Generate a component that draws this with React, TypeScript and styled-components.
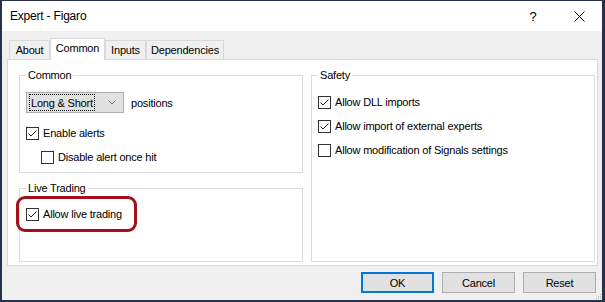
import React from "react";
import styled, { createGlobalStyle } from "styled-components";

const Global = createGlobalStyle`
  html, body { margin: 0; padding: 0; background: #f0f0f0; }
  body {
    font-family: "Liberation Sans", Arial, sans-serif;
    font-size: 11px;
    letter-spacing: -0.2px;
    color: #000;
  }
  * { box-sizing: border-box; }
`;

const Window = styled.div`
  position: relative;
  width: 605px;
  height: 302px;
  border: 1px solid #26314c;
  border-left-width: 2px;
  border-right-width: 3px;
  border-bottom-width: 2px;
  background: #f0f0f0;
  display: flex;
  flex-direction: column;
`;

const TitleBar = styled.div`
  height: 30px;
  background: #fff;
  display: flex;
  align-items: center;
  padding-left: 8px;
`;

const Title = styled.div`
  flex: 1;
  font-size: 12px;
  letter-spacing: -0.2px;
`;

const CaptionButton = styled.div`
  width: 46px;
  height: 30px;
  display: flex;
  align-items: center;
  justify-content: center;
  font-size: 13px;
`;

const Body = styled.div`
  flex: 1;
  display: flex;
  flex-direction: column;
  padding: 7px 4px 0 5px;
`;

const TabStrip = styled.div`
  height: 21px;
  display: flex;
  align-items: flex-start;
  padding-left: 2px;
  position: relative;
  z-index: 1;
`;

const Tab = styled.div<{ $active?: boolean; $w: number }>`
  width: ${(p) => p.$w}px;
  height: ${(p) => (p.$active ? 22 : 19)}px;
  margin-top: ${(p) => (p.$active ? 0 : 2)}px;
  background: ${(p) => (p.$active ? "#fff" : "#f0f0f0")};
  border: 1px solid #d9d9d9;
  border-bottom: none;
  display: flex;
  justify-content: center;
  padding-top: 3px;
  line-height: 13px;
`;

const Panel = styled.div`
  height: 207px;
  background: #fff;
  border: 1px solid #d9d9d9;
  padding: 8px 2px 3px 11px;
  display: grid;
  grid-template-columns: 1fr 1fr;
  column-gap: 8px;
`;

const Column = styled.div`
  display: flex;
  flex-direction: column;
  gap: 8px;
`;

const Group = styled.fieldset<{ $h: number }>`
  margin: 0;
  min-width: 0;
  height: ${(p) => p.$h}px;
  border: 1px solid #dcdcdc;
  padding: 0 6px;
  display: flex;
  flex-direction: column;
`;

const Legend = styled.legend`
  padding: 0 2px;
  line-height: 14px;
  font-size: 11px;
`;

const Row = styled.div<{ $indent?: number; $mt?: number }>`
  position: relative;
  height: 24px;
  display: flex;
  align-items: center;
  gap: 4px;
  margin-left: ${(p) => p.$indent ?? 0}px;
  margin-top: ${(p) => p.$mt ?? 0}px;
`;

const Box = styled.span`
  width: 13px;
  height: 13px;
  border: 1px solid #333;
  background: #fff;
  display: inline-flex;
  flex: none;
`;

const SelectRow = styled.div`
  display: flex;
  align-items: center;
  gap: 7px;
  margin-top: 10px;
  margin-bottom: 8px;
`;

const Select = styled.div`
  width: 98px;
  height: 21px;
  background: #e1e1e1;
  border: 1px solid #adadad;
  display: flex;
  align-items: center;
  padding: 0 2px;
`;

const SelectValue = styled.span`
  flex: none;
  height: 17px;
  border: 1px dotted #000;
  display: flex;
  align-items: center;
  padding: 0 1px;
  white-space: nowrap;
`;

const Chevron = styled.span`
  flex: 1;
  display: flex;
  justify-content: center;
  padding-left: 8px;
`;

const Highlight = styled.div`
  position: absolute;
  left: -10px;
  top: -6px;
  width: 121px;
  height: 36px;
  border: 3px solid #a3101c;
  border-radius: 9px;
  pointer-events: none;
`;

const Footer = styled.div`
  display: flex;
  justify-content: flex-end;
  gap: 8px;
  margin-top: 6px;
  margin-right: 2px;
`;

const Button = styled.div<{ $default?: boolean }>`
  width: 73px;
  height: 21px;
  background: #e1e1e1;
  border: ${(p) => (p.$default ? "2px solid #0078d7" : "1px solid #adadad")};
  display: flex;
  align-items: center;
  justify-content: center;
  font-size: 11px;
`;

const Grip = styled.svg`
  position: absolute;
  right: 0;
  bottom: 0;
`;

const Check: React.FC<{ checked?: boolean }> = ({ checked }) => (
  <Box>
    {checked && (
      <svg width="11" height="11" viewBox="0 0 11 11">
        <polyline points="1.5,5.5 4,8 9.5,2.5" fill="none" stroke="#222" strokeWidth="1" />
      </svg>
    )}
  </Box>
);

export default function App() {
  return (
    <>
      <Global />
      <Window>
        <TitleBar>
          <Title>Expert - Figaro</Title>
          <CaptionButton>?</CaptionButton>
          <CaptionButton>
            <svg width="11" height="11" viewBox="0 0 11 11">
              <path d="M0.5 0.5 L10.5 10.5 M10.5 0.5 L0.5 10.5" stroke="#000" strokeWidth="1" />
            </svg>
          </CaptionButton>
        </TitleBar>
        <Body>
          <TabStrip>
            <Tab $w={41}>About</Tab>
            <Tab $w={55} $active>
              Common
            </Tab>
            <Tab $w={41}>Inputs</Tab>
            <Tab $w={78}>Dependencies</Tab>
          </TabStrip>
          <Panel>
            <Column>
              <Group $h={105}>
                <Legend>Common</Legend>
                <SelectRow>
                  <Select>
                    <SelectValue>Long &amp; Short</SelectValue>
                    <Chevron>
                      <svg width="8" height="5" viewBox="0 0 8 5">
                        <polyline points="0.5,0.5 4,4 7.5,0.5" fill="none" stroke="#707070" strokeWidth="1" />
                      </svg>
                    </Chevron>
                  </Select>
                  <span>positions</span>
                </SelectRow>
                <Row>
                  <Check checked />
                  <span>Enable alerts</span>
                </Row>
                <Row $indent={15}>
                  <Check />
                  <span>Disable alert once hit</span>
                </Row>
              </Group>
              <Group $h={81}>
                <Legend>Live Trading</Legend>
                <Row $mt={7}>
                  <Check checked />
                  <span>Allow live trading</span>
                  <Highlight />
                </Row>
              </Group>
            </Column>
            <Column>
              <Group $h={194}>
                <Legend>Safety</Legend>
                <Row $mt={8}>
                  <Check checked />
                  <span>Allow DLL imports</span>
                </Row>
                <Row>
                  <Check checked />
                  <span>Allow import of external experts</span>
                </Row>
                <Row>
                  <Check />
                  <span>Allow modification of Signals settings</span>
                </Row>
              </Group>
            </Column>
          </Panel>
          <Footer>
            <Button $default>OK</Button>
            <Button>Cancel</Button>
            <Button>Reset</Button>
          </Footer>
        </Body>
        <Grip width="8" height="8" viewBox="0 0 8 8">
          {[
            [6, 2],
            [6, 4],
            [4, 4],
            [6, 6],
            [4, 6],
            [2, 6],
          ].map(([x, y], i) => (
            <rect key={i} x={x} y={y} width="1" height="1" fill="#b0b0b0" />
          ))}
        </Grip>
      </Window>
    </>
  );
}
